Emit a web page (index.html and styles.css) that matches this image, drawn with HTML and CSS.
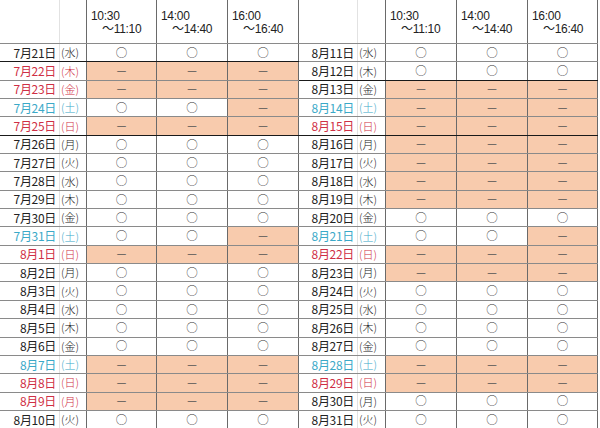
FILE: index.html
```html
<!DOCTYPE html>
<html lang="ja">
<head>
<meta charset="utf-8">
<link rel="stylesheet" href="styles.css">
</head>
<body>
<div class="wrap">
  <div class="tbl left">
    <div class="row head"><span class="d"></span><span class="w"></span><span class="s h"><b>10:30</b><b class="t">～11:10</b></span><span class="s h"><b>14:00</b><b class="t">～14:40</b></span><span class="s h"><b>16:00</b><b class="t">～16:40</b></span></div>
    <div class="row dark"><span class="d">7月21日</span><span class="w">(水)</span><span class="s">○</span><span class="s">○</span><span class="s">○</span></div>
    <div class="row"><span class="d red">7月22日</span><span class="w red">(木)</span><span class="s x">－</span><span class="s x">－</span><span class="s x">－</span></div>
    <div class="row"><span class="d red">7月23日</span><span class="w red">(金)</span><span class="s x">－</span><span class="s x">－</span><span class="s x">－</span></div>
    <div class="row"><span class="d sat">7月24日</span><span class="w sat">(土)</span><span class="s">○</span><span class="s">○</span><span class="s x">－</span></div>
    <div class="row dark"><span class="d red">7月25日</span><span class="w red">(日)</span><span class="s x">－</span><span class="s x">－</span><span class="s x">－</span></div>
    <div class="row"><span class="d">7月26日</span><span class="w">(月)</span><span class="s">○</span><span class="s">○</span><span class="s">○</span></div>
    <div class="row"><span class="d">7月27日</span><span class="w">(火)</span><span class="s">○</span><span class="s">○</span><span class="s">○</span></div>
    <div class="row"><span class="d">7月28日</span><span class="w">(水)</span><span class="s">○</span><span class="s">○</span><span class="s">○</span></div>
    <div class="row"><span class="d">7月29日</span><span class="w">(木)</span><span class="s">○</span><span class="s">○</span><span class="s">○</span></div>
    <div class="row"><span class="d">7月30日</span><span class="w">(金)</span><span class="s">○</span><span class="s">○</span><span class="s">○</span></div>
    <div class="row"><span class="d sat">7月31日</span><span class="w sat">(土)</span><span class="s">○</span><span class="s">○</span><span class="s x">－</span></div>
    <div class="row"><span class="d red">8月1日</span><span class="w red">(日)</span><span class="s x">－</span><span class="s x">－</span><span class="s x">－</span></div>
    <div class="row"><span class="d">8月2日</span><span class="w">(月)</span><span class="s">○</span><span class="s">○</span><span class="s">○</span></div>
    <div class="row"><span class="d">8月3日</span><span class="w">(火)</span><span class="s">○</span><span class="s">○</span><span class="s">○</span></div>
    <div class="row"><span class="d">8月4日</span><span class="w">(水)</span><span class="s">○</span><span class="s">○</span><span class="s">○</span></div>
    <div class="row"><span class="d">8月5日</span><span class="w">(木)</span><span class="s">○</span><span class="s">○</span><span class="s">○</span></div>
    <div class="row"><span class="d">8月6日</span><span class="w">(金)</span><span class="s">○</span><span class="s">○</span><span class="s">○</span></div>
    <div class="row"><span class="d sat">8月7日</span><span class="w sat">(土)</span><span class="s x">－</span><span class="s x">－</span><span class="s x">－</span></div>
    <div class="row"><span class="d red">8月8日</span><span class="w red">(日)</span><span class="s x">－</span><span class="s x">－</span><span class="s x">－</span></div>
    <div class="row"><span class="d red">8月9日</span><span class="w red">(月)</span><span class="s x">－</span><span class="s x">－</span><span class="s x">－</span></div>
    <div class="row"><span class="d">8月10日</span><span class="w">(火)</span><span class="s">○</span><span class="s">○</span><span class="s">○</span></div>
  </div>
  <div class="tbl right">
    <div class="row head"><span class="d"></span><span class="w"></span><span class="s h"><b>10:30</b><b class="t">～11:10</b></span><span class="s h"><b>14:00</b><b class="t">～14:40</b></span><span class="s h"><b>16:00</b><b class="t">～16:40</b></span></div>
    <div class="row"><span class="d">8月11日</span><span class="w">(水)</span><span class="s">○</span><span class="s">○</span><span class="s">○</span></div>
    <div class="row dark"><span class="d">8月12日</span><span class="w">(木)</span><span class="s">○</span><span class="s">○</span><span class="s">○</span></div>
    <div class="row"><span class="d">8月13日</span><span class="w">(金)</span><span class="s x">－</span><span class="s x">－</span><span class="s x">－</span></div>
    <div class="row"><span class="d sat">8月14日</span><span class="w sat">(土)</span><span class="s x">－</span><span class="s x">－</span><span class="s x">－</span></div>
    <div class="row dark"><span class="d red">8月15日</span><span class="w red">(日)</span><span class="s x">－</span><span class="s x">－</span><span class="s x">－</span></div>
    <div class="row"><span class="d">8月16日</span><span class="w">(月)</span><span class="s x">－</span><span class="s x">－</span><span class="s x">－</span></div>
    <div class="row"><span class="d">8月17日</span><span class="w">(火)</span><span class="s x">－</span><span class="s x">－</span><span class="s x">－</span></div>
    <div class="row"><span class="d">8月18日</span><span class="w">(水)</span><span class="s x">－</span><span class="s x">－</span><span class="s x">－</span></div>
    <div class="row"><span class="d">8月19日</span><span class="w">(木)</span><span class="s x">－</span><span class="s x">－</span><span class="s x">－</span></div>
    <div class="row"><span class="d">8月20日</span><span class="w">(金)</span><span class="s">○</span><span class="s">○</span><span class="s">○</span></div>
    <div class="row"><span class="d sat">8月21日</span><span class="w sat">(土)</span><span class="s">○</span><span class="s">○</span><span class="s x">－</span></div>
    <div class="row"><span class="d red">8月22日</span><span class="w red">(日)</span><span class="s x">－</span><span class="s x">－</span><span class="s x">－</span></div>
    <div class="row"><span class="d">8月23日</span><span class="w">(月)</span><span class="s x">－</span><span class="s x">－</span><span class="s x">－</span></div>
    <div class="row"><span class="d">8月24日</span><span class="w">(火)</span><span class="s">○</span><span class="s">○</span><span class="s">○</span></div>
    <div class="row"><span class="d">8月25日</span><span class="w">(水)</span><span class="s">○</span><span class="s">○</span><span class="s">○</span></div>
    <div class="row"><span class="d">8月26日</span><span class="w">(木)</span><span class="s">○</span><span class="s">○</span><span class="s">○</span></div>
    <div class="row"><span class="d">8月27日</span><span class="w">(金)</span><span class="s">○</span><span class="s">○</span><span class="s">○</span></div>
    <div class="row"><span class="d sat">8月28日</span><span class="w sat">(土)</span><span class="s x">－</span><span class="s x">－</span><span class="s x">－</span></div>
    <div class="row"><span class="d red">8月29日</span><span class="w red">(日)</span><span class="s x">－</span><span class="s x">－</span><span class="s x">－</span></div>
    <div class="row"><span class="d">8月30日</span><span class="w">(月)</span><span class="s">○</span><span class="s">○</span><span class="s">○</span></div>
    <div class="row"><span class="d">8月31日</span><span class="w">(火)</span><span class="s">○</span><span class="s">○</span><span class="s">○</span></div>
  </div>
</div>
</body>
</html>
```
FILE: styles.css
```css
html, body {
  margin: 0;
  padding: 0;
  background: #fff;
}
body {
  font-family: "Noto Sans CJK JP", "Noto Sans", sans-serif;
  font-weight: 300;
  color: #222;
  font-size: 12px;
  width: 600px;
  height: 428px;
  overflow: hidden;
}
.wrap {
  display: flex;
  align-items: flex-start;
}
.tbl {
  display: flex;
  flex-direction: column;
}
.left { width: 299px; }
.right { width: 299px; }
.row {
  display: grid;
  height: 18.35px;
  box-sizing: border-box;
  border-bottom: 1px solid #8a8a8a;
}
.left .row { grid-template-columns: 60px 27px 70px 71px 71px; }
.right .row { grid-template-columns: 59px 28px 71px 71px 70px; }
.row.head {
  height: 44px;
  border-bottom-color: #8a8a8a;
}
.row.dark { border-bottom-color: #1a1a1a; }
.row > span {
  display: flex;
  align-items: center;
  box-sizing: border-box;
  line-height: 1;
  white-space: nowrap;
}
.d {
  justify-content: flex-end;
  padding-right: 3px;
  border-right: 1px solid #e2e2e2;
  font-size: 12px;
  font-weight: 400;
  letter-spacing: -0.3px;
}
.w {
  justify-content: flex-start;
  padding-left: 1px;
  font-size: 11px;
  border-right: 1px solid #6a6a6a;
}
.s {
  justify-content: center;
  border-right: 1px solid #6a6a6a;
  font-size: 11.5px;
  color: #333;
}
.s.x {
  background: #f8cbad;
  color: #555;
  font-size: 12px;
  font-weight: 400;
}
.row > .s.h {
  display: flex;
  flex-direction: column;
  align-items: flex-start;
  justify-content: flex-start;
  padding: 10px 0 0 4px;
  font-family: "Liberation Sans", "Noto Sans CJK JP", sans-serif;
  font-size: 12px;
  color: #222;
}
.s.h b {
  display: block;
  font-weight: normal;
  line-height: 13px;
  height: 13px;
  letter-spacing: -0.3px;
}
.s.h b.t {
  padding-left: 11px;
}
.red { color: #cf2f45; }
.sat { color: #3aa9c8; }
```
